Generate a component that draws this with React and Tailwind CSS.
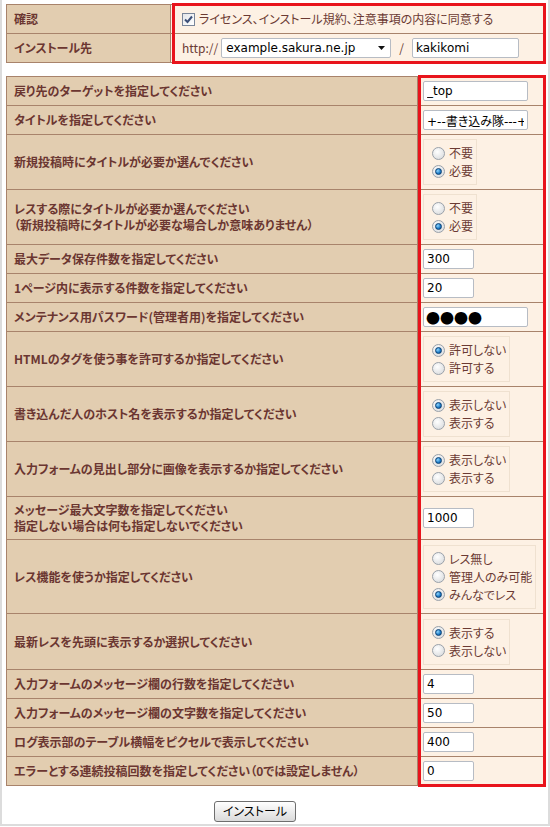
import React from "react";

const jp = "font-['Noto_Sans_CJK_JP',sans-serif] [font-feature-settings:'palt']";
const field = "font-['DejaVu_Sans','Noto_Sans_CJK_JP',sans-serif]";

function Radio({ checked }) {
  return (
    <span className="w-[13px] h-[13px] rounded-full border border-[#9aa1aa] bg-[radial-gradient(circle_at_40%_35%,#ffffff,#d4d6d8)] flex items-center justify-center shrink-0">
      {checked && (
        <span className="w-[7px] h-[7px] rounded-full border border-[#0a3f73] bg-[radial-gradient(circle_at_35%_35%,#8fd6ff,#1b79c4_60%,#0a4a86)]" />
      )}
    </span>
  );
}

function RadioGroup({ options, checked }) {
  return (
    <div className="inline-flex flex-col border border-[#efe1d0] pl-[8px] pr-[3px] py-[4px]">
      {options.map((o, i) => (
        <label key={o} className="flex items-center gap-[4px] h-[18px] text-[12px] text-[#6b3a33]">
          <Radio checked={i === checked} />
          <span>{o}</span>
        </label>
      ))}
    </div>
  );
}

function TextBox({ value, w }) {
  return (
    <input
      readOnly
      value={value}
      className={`${w} h-[20px] border border-[#b7bcc4] rounded-[2px] bg-white px-[3px] text-[12px] text-black outline-none ${field}`}
    />
  );
}

// h = content height of the row, the 1px divider comes on top of it
const rows = [
  { label: ["戻り先のターゲットを指定してください"], h: "h-[28px]", input: "_top", w: "w-[105px]" },
  { label: ["タイトルを指定してください"], h: "h-[28px]", input: "+--書き込み隊---+", w: "w-[105px]" },
  { label: ["新規投稿時にタイトルが必要か選んでください"], h: "h-[54px]", radios: ["不要", "必要"], checked: 1 },
  {
    label: ["レスする際にタイトルが必要か選んでください", "（新規投稿時にタイトルが必要な場合しか意味ありません）"],
    h: "h-[54px]",
    radios: ["不要", "必要"],
    checked: 1,
  },
  { label: ["最大データ保存件数を指定してください"], h: "h-[28px]", input: "300", w: "w-[51px]" },
  { label: ["1ページ内に表示する件数を指定してください"], h: "h-[28px]", input: "20", w: "w-[51px]" },
  { label: ["メンテナンス用パスワード(管理者用)を指定してください"], h: "h-[28px]", password: true },
  { label: ["HTMLのタグを使う事を許可するか指定してください"], h: "h-[54px]", radios: ["許可しない", "許可する"], checked: 0 },
  { label: ["書き込んだ人のホスト名を表示するか指定してください"], h: "h-[54px]", radios: ["表示しない", "表示する"], checked: 0 },
  { label: ["入力フォームの見出し部分に画像を表示するか指定してください"], h: "h-[54px]", radios: ["表示しない", "表示する"], checked: 0 },
  {
    label: ["メッセージ最大文字数を指定してください", "指定しない場合は何も指定しないでください"],
    h: "h-[42px]",
    input: "1000",
    w: "w-[51px]",
  },
  { label: ["レス機能を使うか指定してください"], h: "h-[73px]", radios: ["レス無し", "管理人のみ可能", "みんなでレス"], checked: 2 },
  { label: ["最新レスを先頭に表示するか選択してください"], h: "h-[55px]", radios: ["表示する", "表示しない"], checked: 0 },
  { label: ["入力フォームのメッセージ欄の行数を指定してください"], h: "h-[28px]", input: "4", w: "w-[51px]" },
  { label: ["入力フォームのメッセージ欄の文字数を指定してください"], h: "h-[28px]", input: "50", w: "w-[51px]" },
  { label: ["ログ表示部のテーブル横幅をピクセルで表示してください"], h: "h-[28px]", input: "400", w: "w-[51px]" },
  { label: ["エラーとする連続投稿回数を指定してください（0では設定しません）"], h: "h-[28px]", input: "0", w: "w-[51px]" },
];

export default function App() {
  return (
    <div className={`w-[550px] h-[827px] bg-white overflow-hidden ${jp}`}>
      <div className="h-[826px] border-x-2 border-b-2 border-[#dcdcdc] px-[4px] pt-[4px]">
        {/* confirm table */}
        <div className="relative">
          <div className="border border-[#a8836b]">
            <div className="flex h-[28px]">
              <div className="w-[164px] bg-[#e2cdb0] border-r border-[#a8836b] pl-[7px] flex items-center text-[12px] font-bold text-[#6b3631]">
                確認
              </div>
              <div className="flex-1 bg-[#fdf1e4] pl-[11px] flex items-center gap-[4px] text-[12px] text-[#6b3a33]">
                <span className="w-[13px] h-[13px] border border-[#7a869a] bg-linear-to-br from-[#e4e6ea] to-white flex items-center justify-center">
                  <svg width="9" height="9" viewBox="0 0 9 9">
                    <path d="M1 4.5 L3.5 7 L8 1.5" fill="none" stroke="#3c4f78" strokeWidth="2" />
                  </svg>
                </span>
                <span>ライセンス、インストール規約、注意事項の内容に同意する</span>
              </div>
            </div>
            <div className="border-t border-[#a8836b]">
              <div className="flex h-[28px]">
                <div className="w-[164px] bg-[#e2cdb0] border-r border-[#a8836b] pl-[7px] flex items-center text-[12px] font-bold text-[#6b3631]">
                  インストール先
                </div>
                <div className="flex-1 bg-[#fdf1e4] pl-[11px] flex items-center text-[12px] text-[#6b3a33]">
                  <span className="mr-[3px]">http://</span>
                  <div className="relative">
                    <select
                      className={`appearance-none w-[170px] h-[20px] border border-[#b7bcc4] rounded-[2px] bg-white pl-[4px] text-[12px] text-black outline-none ${field}`}
                    >
                      <option>example.sakura.ne.jp</option>
                    </select>
                    <svg className="absolute right-[6px] top-[8px]" width="7" height="4" viewBox="0 0 7 4">
                      <path d="M0 0 H7 L3.5 4 Z" fill="#111" />
                    </svg>
                  </div>
                  <span className="mx-[8px]">/</span>
                  <TextBox value="kakikomi" w="w-[107px]" />
                </div>
              </div>
            </div>
          </div>
          <div className="absolute left-[166px] top-[-1px] w-[374px] h-[61px] border-[3px] border-[#e8141c]" />
        </div>

        {/* settings table */}
        <div className="relative mt-[13px]">
          <div className="border border-[#a8836b]">
            {rows.map((r, i) => (
              <div key={i} className={i > 0 ? "border-t border-[#a8836b]" : ""}>
                <div className={`flex ${r.h}`}>
                  <div className="w-[411px] bg-[#e2cdb0] border-r border-[#a8836b] pl-[7px] flex flex-col justify-center text-[12px] leading-[16px] font-bold text-[#6b3631]">
                    {r.label.map((l) => (
                      <div key={l}>{l}</div>
                    ))}
                  </div>
                  <div className="flex-1 bg-[#fdf1e4] pl-[5px] flex items-center">
                    {r.input !== undefined && <TextBox value={r.input} w={r.w} />}
                    {r.password && (
                      <input
                        readOnly
                        value="●●●●"
                        className="w-[105px] h-[20px] border border-[#b7bcc4] rounded-[2px] bg-white px-[2px] text-[14px] leading-[18px] text-black outline-none font-['Noto_Sans_CJK_JP',sans-serif]"
                      />
                    )}
                    {r.radios && <RadioGroup options={r.radios} checked={r.checked} />}
                  </div>
                </div>
              </div>
            ))}
          </div>
          <div className="absolute left-[412px] top-[-1px] w-[128px] h-[712px] border-[3px] border-[#e8141c]" />
        </div>

        <div className="mt-[11px] pl-[208px]">
          <button className="w-[82px] h-[21px] border border-[#6e6e6e] rounded-[3px] bg-linear-to-b from-white to-[#dadada] text-[12px] text-black leading-none">
            インストール
          </button>
        </div>
      </div>
    </div>
  );
}
